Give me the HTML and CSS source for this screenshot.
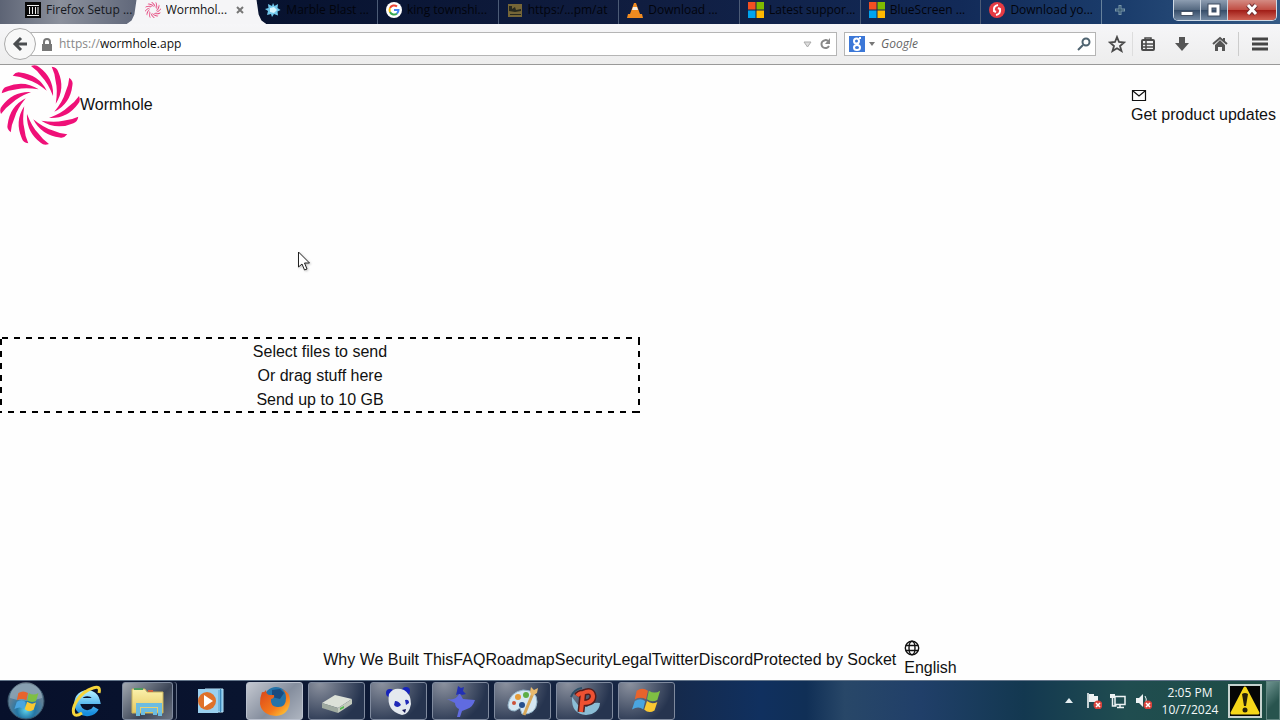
FILE: index.html
```html
<!DOCTYPE html>
<html lang="en">
<head>
<meta charset="utf-8">
<title>Wormhole</title>
<link rel="stylesheet" href="styles.css">
</head>
<body>
<svg class="defs" aria-hidden="true">
  <defs>
    <path id="blade" d="M31 1Q36-1 39 2Q54 13 53 31Q48 18 42 12Q37 5 31 1Z"/>
    <g id="swirl">
      <use href="#blade"/><use href="#blade" transform="rotate(30 40 40)"/><use href="#blade" transform="rotate(60 40 40)"/><use href="#blade" transform="rotate(90 40 40)"/><use href="#blade" transform="rotate(120 40 40)"/><use href="#blade" transform="rotate(150 40 40)"/><use href="#blade" transform="rotate(180 40 40)"/><use href="#blade" transform="rotate(210 40 40)"/><use href="#blade" transform="rotate(240 40 40)"/><use href="#blade" transform="rotate(270 40 40)"/><use href="#blade" transform="rotate(300 40 40)"/><use href="#blade" transform="rotate(330 40 40)"/>
    </g>
    <g id="windows-tiles"><path fill="#f25022" d="M0 0h7.500v7.500H0z"/><path fill="#7fba00" d="M8.500 0H16v7.500H8.500z"/><path fill="#00a4ef" d="M0 8.500h7.500V16H0z"/><path fill="#ffb900" d="M8.500 8.500H16V16H8.500z"/></g>
    <g id="windows-flag"><path fill="#e8642c" d="M3 5Q9 1 15 5L13 14Q7 11 1 14Z"/><path fill="#7fbf43" d="M16 5Q22 9 28 5L25 15Q19 18 14 14Z"/><path fill="#4aa5e0" d="M1 16Q7 12 12 16L10 25Q5 21-2 25Z"/><path fill="#fac832" d="M14 16Q19 20 25 17L22 26Q16 30 11 25Z"/></g>
    <g id="badge"><circle cx="13" cy="13" r="4.500" fill="#d9433c"/><path d="M11 11l4 4m0-4l-4 4" stroke="#fff" stroke-width="1.500"/></g>
    <radialGradient id="orb" cy=".75"><stop offset="0" stop-color="#5fd5ee"/><stop offset=".5" stop-color="#2476a5"/><stop offset="1" stop-color="#5f7f96"/></radialGradient>
    <linearGradient id="ie" x2="0" y2="1"><stop stop-color="#a6e9ff"/><stop offset="1" stop-color="#188fdf"/></linearGradient>
    <linearGradient id="folder" x2="0" y2="1"><stop stop-color="#fbf1ac"/><stop offset="1" stop-color="#e5c75f"/></linearGradient>
    <linearGradient id="fox" x2="1" y2="1"><stop stop-color="#d9431b"/><stop offset=".6" stop-color="#f47a1c"/><stop offset="1" stop-color="#ffd93d"/></linearGradient>
  </defs>
</svg>

<header class="browser">
  <div class="titlebar">
    <div class="tabs" role="tablist">
      <button class="tab tab-light" role="tab"><svg class="favicon" viewBox="0 0 16 16"><path fill="#090909" d="M0 0h16v16H0z"/><path stroke="#eee" d="M2 3.500h12M2 13.500h12M4.500 5v7M7.500 5v7M10.500 5v7M13 5v7"/></svg><span class="tab-label">Firefox Setup ...</span></button>
      <button class="tab tab-active" role="tab" aria-selected="true"><svg class="favicon" viewBox="0 0 80 80"><use href="#swirl" fill="#e64b80"/></svg><span class="tab-label">Wormhol...</span><svg class="tab-close" viewBox="0 0 8 8"><path d="M1 1l6 6m0-6L1 7" stroke="#777" stroke-width="2"/></svg></button>
      <button class="tab no-line" role="tab"><svg class="favicon" viewBox="0 0 16 16"><path fill="#72c9ed" d="M8 1l1.500 3L13 2l-.5 4 3 2-3 1.500.5 4-4-1.500L7 15l-1-3-4 1 1-4-3-2 3.500-1L3 2l4 2z"/><path fill="#d8f6ff" d="M5 6l4-1 3 3-3 3-4-1z"/></svg><span class="tab-label">Marble Blast ...</span></button>
      <button class="tab" role="tab"><svg class="favicon" viewBox="0 0 16 16"><circle cx="8" cy="8" r="8" fill="#fff"/><g fill="none" stroke-width="2"><path stroke="#ea4335" d="M4 6a4.500 4.500 0 0 1 7-1.500"/><path stroke="#fbbc05" d="M4 6a5 5 0 0 0 0 4"/><path stroke="#34a853" d="M4 10a4.500 4.500 0 0 0 7 1.500"/><path stroke="#4285f4" d="M8 8h4.500q0 2-1.500 3.500"/></g></svg><span class="tab-label">king townshi...</span></button>
      <button class="tab" role="tab"><svg class="favicon" viewBox="0 0 16 16"><path fill="#766637" d="M1 2h14v13H1z"/><path fill="#27291f" d="M2 4h3v3l3-2 1 3 5-1v2l-6 1-6-1zM3 12h11v1H3z"/></svg><span class="tab-label">https:/...pm/at</span></button>
      <button class="tab" role="tab"><svg class="favicon" viewBox="0 0 16 16"><path fill="#f08b20" d="M7 1h2l4 11H3zM1 12h14l1 4H0z"/><path fill="#f4eee3" d="M6 5h4l1 3H5z"/></svg><span class="tab-label">Download ...</span></button>
      <button class="tab" role="tab"><svg class="favicon" viewBox="0 0 16 16"><use href="#windows-tiles"/></svg><span class="tab-label">Latest suppor...</span></button>
      <button class="tab" role="tab"><svg class="favicon" viewBox="0 0 16 16"><use href="#windows-tiles"/></svg><span class="tab-label">BlueScreen ...</span></button>
      <button class="tab" role="tab"><svg class="favicon" viewBox="0 0 16 16"><circle cx="8" cy="8" r="8" fill="#e63b43"/><path d="M9 3Q4 4 5 9l2 1M7 13q5-1 4-6L9 6" fill="none" stroke="#fff" stroke-width="2"/></svg><span class="tab-label">Download yo...</span></button>
    </div>
    <button class="new-tab" aria-label="New tab"><svg width="12" height="12" viewBox="0 0 12 12"><path d="M6 1v10M1 6h10" stroke="#7895a8" stroke-width="3"/><path d="M6 2v8M2 6h8" stroke="#294c67"/></svg></button>
    <div class="window-buttons">
      <button class="win-button" aria-label="Minimize"><svg width="14" height="14" viewBox="0 0 14 14"><path fill="#fff" stroke="#455264" d="M1 8.500h12v4H1z"/></svg></button>
      <button class="win-button" aria-label="Restore"><svg width="14" height="14" viewBox="0 0 14 14"><path fill="none" stroke="#3f4c61" stroke-width="5" d="M3 3h8v8H3z"/><path fill="none" stroke="#fff" stroke-width="3" d="M3 3h8v8H3z"/></svg></button>
      <button class="win-button win-close" aria-label="Close"><svg width="14" height="14" viewBox="0 0 14 14"><path d="M3 2l8 9m0-9l-8 9" stroke="#713235" stroke-width="5"/><path d="M3 2l8 9m0-9l-8 9" stroke="#fff" stroke-width="3"/></svg></button>
    </div>
  </div>

  <div class="toolbar">
    <button class="back" aria-label="Back"><svg width="16" height="16" viewBox="0 0 16 16"><path d="M9 2L3 8l6 6M4 8h11" fill="none" stroke="#4a4d50" stroke-width="3"/></svg></button>
    <div class="address">
      <svg width="10" height="13" viewBox="0 0 10 13"><path d="M2 6V4a3 3 0 0 1 6 0v2" fill="none" stroke="#777" stroke-width="2"/><path fill="#777" d="M0 6h10v7H0z"/></svg>
      <a class="url" href="#"><span class="scheme">https://</span>wormhole.app</a>
      <svg width="9" height="7" viewBox="0 0 9 7"><path d="M1 1h7L4.500 6z" fill="#ddd" stroke="#aaa"/></svg>
      <button class="plain" aria-label="Reload"><svg width="12" height="12" viewBox="0 0 12 12"><path d="M9 3a4 4 0 1 0 1 5" fill="none" stroke="#888" stroke-width="2"/><path fill="#888" d="M11 0v6H6z"/></svg></button>
    </div>
    <div class="search">
      <svg width="16" height="16" viewBox="0 0 16 16"><path fill="#3c78d8" d="M0 0h16v16H0z"/><g fill="none" stroke="#fff" stroke-width="2"><circle cx="7.500" cy="5" r="2.500"/><ellipse cx="8" cy="11.500" rx="3" ry="2.500"/><path d="M10 2h2M9 7l-1 2"/></g></svg>
      <svg width="6" height="4" viewBox="0 0 6 4"><path fill="#777" d="M0 0h6L3 4z"/></svg>
      <input class="search-input" type="text" placeholder="Google" aria-label="Search with Google">
      <button class="plain" aria-label="Search"><svg width="14" height="14" viewBox="0 0 14 14"><circle cx="9" cy="5" r="3.500" fill="none" stroke="#4e6370" stroke-width="2"/><path d="M6 8l-5 5" stroke="#4e6370" stroke-width="2"/></svg></button>
    </div>
    <div class="tools">
      <button class="tool tool-star" aria-label="Bookmark"><svg width="18" height="18" viewBox="0 0 18 18"><path d="M9 2l2 5 5 .5-4 3.500 1.500 5L9 13.200 4.500 16 6 11 2 7.500 7 7z" fill="none" stroke="#4a4a4a" stroke-width="1.800"/></svg></button>
      <button class="tool tool-list" aria-label="Bookmarks menu"><svg width="16" height="16" viewBox="0 0 16 16"><rect x="2" y="4" width="12" height="10" rx="1" fill="none" stroke="#4a4a4a" stroke-width="2"/><path d="M5 4V2h6v2M3 8h11M3 11h11M6 5v9" fill="none" stroke="#4a4a4a" stroke-width="1.500"/></svg></button>
      <button class="tool" aria-label="Downloads"><svg width="16" height="16" viewBox="0 0 16 16"><path fill="#555" d="M5 1h6v6h4l-7 8-7-8h4z"/></svg></button>
      <button class="tool" aria-label="Home"><svg width="16" height="16" viewBox="0 0 16 16"><path d="M1 8l7-6 7 6" fill="none" stroke="#555" stroke-width="2"/><path fill="#555" d="M3 9l5-5 5 5v6h-3v-4H6v4H3zM11 2h2v4h-2z"/></svg></button>
      <button class="tool tool-menu" aria-label="Menu"><svg width="16" height="14" viewBox="0 0 16 14"><path d="M0 2h16M0 7h16M0 12h16" stroke="#444" stroke-width="3"/></svg></button>
    </div>
  </div>
</header>

<div class="page">
  <div class="page-header">
    <a class="brand" href="#"><svg width="80" height="80" viewBox="0 0 80 80"><use href="#swirl" fill="#ef1078"/></svg>Wormhole</a>
    <a class="updates" href="#"><svg width="16" height="16" viewBox="0 0 16 16"><path d="M1.500 3.500h13v10h-13zM2 4l6 5 6-5" fill="none" stroke="#111" stroke-width="1.200"/></svg>Get product updates</a>
  </div>
  <main class="main">
    <div class="drop">
      <button class="plain drop-button">Select files to send</button>
      <span>Or drag stuff here</span>
      <span>Send up to 10 GB</span>
    </div>
  </main>
  <footer class="footer">
    <nav class="links"><a href="#">Why We Built This</a><a href="#">FAQ</a><a href="#">Roadmap</a><a href="#">Security</a><a href="#">Legal</a><a href="#">Twitter</a><a href="#">Discord</a><a href="#">Protected by Socket</a></nav>
    <button class="plain language"><svg width="16" height="16" viewBox="0 0 16 16"><g fill="none" stroke="#111" stroke-width="1.400"><circle cx="8" cy="8" r="6.700"/><ellipse cx="8" cy="8" rx="3" ry="6.700"/><path d="M2 5.500h12M2 10.500h12"/></g></svg>English</button>
  </footer>
</div>

<footer class="taskbar">
  <button class="start" aria-label="Start"><svg width="38" height="38" viewBox="0 0 38 38"><circle cx="19" cy="19" r="18" fill="url(#orb)" stroke="#385468"/><path fill="#fff" opacity=".25" d="M3 16A16 16 0 0 1 35 16Q19 22 3 16"/><use href="#windows-flag" transform="translate(9 7) scale(.8)"/></svg></button>
  <button class="pinned" aria-label="Internet Explorer"><svg width="34" height="34" viewBox="0 0 34 34"><path d="M26 24A10 10 0 1 1 27 17H9" fill="none" stroke="url(#ie)" stroke-width="6"/><path d="M29 9Q31 1 23 4C10 8 1 23 4 30q2 3 8-1" fill="none" stroke="#f6d53c" stroke-width="3"/></svg></button>
  <button class="task explorer" aria-label="Windows Explorer"><svg width="34" height="32" viewBox="0 0 34 32"><path fill="url(#folder)" stroke="#c8b45f" d="M1 4h13l2 3h16v21H1z"/><path stroke="#4d9960" stroke-width="2" d="M3 4h9"/><path stroke="#cc6040" stroke-width="2" d="M17 6h5"/><path d="M7 31V20h22v11m-17-1v-5h12v5" fill="none" stroke="#6dbce0" stroke-width="4"/></svg></button>
  <button class="pinned media" aria-label="Media Player"><svg width="28" height="26" viewBox="0 0 28 26"><path fill="#75b8e0" stroke="#bde5f8" d="M8 1h18v23H8z"/><path stroke="#3b87b8" d="M23.500 1v23"/><path fill="#9bd0ee" d="M1 1h20v24H1z"/><circle cx="10" cy="13" r="9" fill="#df712a"/><path fill="#fff" d="M7 7l9 6-9 6z"/></svg></button>
  <div class="tasks">
    <button class="task task-active" aria-label="Firefox"><svg width="32" height="32" viewBox="0 0 32 32"><circle cx="17" cy="14" r="12" fill="#2573a8"/><path fill="#184b80" d="M13 5l8-1 4 4-4 6-8-2z"/><path fill="url(#fox)" d="M3 7q2 1 4-2 0 4 3 5l5 0q1 3-3 4-1 7 6 8 9 1 9-9 0-6-4-9 8 3 8 12-1 14-14 15Q3 30 1 19q0-7 2-12"/></svg></button>
    <button class="task" aria-label="Drive"><svg width="34" height="28" viewBox="0 0 34 28"><path fill="#dce1d8" d="M2 16L15 8l17 4-14 9z"/><path fill="#9faaa0" d="M2 16l16 5v5L2 21z"/><path fill="#c3cabd" d="M18 21l14-9v5l-14 9z"/><path fill="#53b94e" d="M20 21l4-2v2l-4 2z"/></svg></button>
    <button class="task" aria-label="Panda"><svg width="28" height="32" viewBox="0 0 28 32"><circle cx="5" cy="8" r="4" fill="#1724ba"/><circle cx="21" cy="6" r="4" fill="#1724ba"/><path fill="#e4e9ef" d="M4 9Q9 1 19 5q7 4 7 14-2 11-9 11Q1 26 4 9"/><path fill="#2029b8" d="M10 16q4 0 6 4-4 4-7 0zM20 15q4-1 4 3l-3 2z"/><path fill="#111453" d="M17 25l4-1-1 4z"/></svg></button>
    <button class="task" aria-label="Bird"><svg width="34" height="34" viewBox="0 0 34 34"><path fill="#2230b4" d="M14 2l3 2 3-1-1 4 3 3-4 1-2-1-4 1 1-4z"/><path fill="#606be0" d="M16 10l3 5 12 1q-2 7-8 9l-5 2-2 6h-3l2-8q-4-2-4-6L3 15q9 2 12-5"/></svg></button>
    <button class="task" aria-label="Paint"><svg width="34" height="32" viewBox="0 0 34 32"><path fill="#d5e7f3" stroke="#94b4c9" d="M2 20Q4 7 17 5q14 0 14 12-1 13-15 12l-2-6-5 3q-7 0-7-6"/><circle cx="12" cy="12" r="3" fill="#e59b37"/><circle cx="20" cy="10" r="3" fill="#5dae47"/><circle cx="8" cy="18" r="2" fill="#cc5139"/><circle cx="16" cy="20" r="3" fill="#264f8c"/><path d="M18 30l9-22" stroke="#d8a758" stroke-width="3"/><path fill="#e9ba6e" d="M25 2l3 3 4-2-1 5-5 3-2-4z"/></svg></button>
    <button class="task" aria-label="Paint Shop"><svg width="34" height="34" viewBox="0 0 34 34"><path fill="#8bbdd5" d="M4 13q-1 17 14 18 13-1 14-12-8-1-13 4l-9-2z"/><path d="M3 13Q6 5 14 4" fill="none" stroke="#2c4f68" stroke-width="2"/><path d="M13 28L15 9Q11 9 9 12M15 9q9-4 10 3 0 7-10 7" fill="none" stroke="#521d1d" stroke-width="7"/><path d="M13 28L15 9Q11 9 9 12M15 9q9-4 10 3 0 7-10 7" fill="none" stroke="#ef5132" stroke-width="4"/></svg></button>
    <button class="task" aria-label="Windows"><svg width="30" height="30" viewBox="-2 0 32 32"><use href="#windows-flag"/></svg></button>
  </div>
  <div class="tray">
    <button class="plain" aria-label="Show hidden icons"><svg width="8" height="5" viewBox="0 0 8 5"><path fill="#e5eff2" d="M0 5l4-5 4 5z"/></svg></button>
    <svg width="17" height="17" viewBox="0 0 17 17"><path d="M3 1v15" stroke="#fff" stroke-width="1.500"/><path fill="#eef3f4" d="M4 2h5v2h4v6H4z"/><use href="#badge"/></svg>
    <svg width="17" height="17" viewBox="0 0 17 17"><path d="M5 4.500h10v8H5zM7 15.500h7M10 13v2M2.500 4v10h4" fill="none" stroke="#eef3f4" stroke-width="1.500"/><path fill="#eef3f4" d="M0 2h5v4H0z"/></svg>
    <svg width="17" height="17" viewBox="0 0 17 17"><path fill="#eef3f4" d="M1 6h3l4-4v13l-4-4H1z"/><path d="M10 4q2 3 1 6" stroke="#eef3f4" fill="none"/><use href="#badge"/></svg>
    <time class="clock">2:05 PM<br>10/7/2024</time>
    <svg class="warning" width="34" height="34" viewBox="0 0 34 34"><path fill="#050505" stroke="#c6d3cf" stroke-width="2" d="M1 1h32v32H1z"/><path fill="#f5d619" stroke="#f5d619" stroke-width="3" stroke-linejoin="round" d="M17 4L30 29H4z"/><path fill="#26200a" d="M14 10q3-2 6 0l-2 12h-2z"/><circle cx="17" cy="26" r="2.500" fill="#26200a"/></svg>
  </div>
  <button class="show-desktop" aria-label="Show desktop"></button>
</footer>

<svg class="cursor" width="13" height="20" viewBox="0 0 13 20" aria-hidden="true"><path fill="#fff" stroke="#222" d="M.5 1v15l3.500-3 2.500 6 2.500-1-2.500-6h5z"/></svg>
</body>
</html>
```
FILE: styles.css
```css
* { box-sizing: border-box; }
body {
  margin: 0;
  min-height: 100vh;
  display: flex;
  flex-direction: column;
  font: 16px/24px "Liberation Sans", Arial, sans-serif;
  color: #111;
  background: #fefefe;
}
svg { display: block; flex: none; }
button { font: inherit; color: inherit; padding: 0; border: 0; background: none; }
a { color: inherit; text-decoration: none; }
.defs { position: absolute; width: 0; height: 0; }
.browser { font: 12px/20px "Open Sans", "Noto Sans", sans-serif; }

.titlebar {
  display: flex;
  height: 24px;
  padding: 0 3px 0 16px;
  background: linear-gradient(90deg, #5d6475 0, #8b909c 60px, #646b7d 130px, #07122f 260px, #101d40 50%, #122a58 75%, #1b3d6c 88%, #345a85 100%);
}
.tabs { flex: 1; display: flex; }
.tab {
  flex: 1 1 0;
  min-width: 0;
  height: 24px;
  padding: 0 0 4px 8px;
  display: flex;
  align-items: center;
  gap: 5px;
  color: #02040c;
  border-left: 1px solid #4c5b76;
}
.tab-light, .no-line { border-color: transparent; }
.tab-light { color: #151820; }
.tab-label { flex: 1; overflow: hidden; white-space: nowrap; text-align: left; }
.favicon { width: 16px; height: 16px; }
.tab-active { position: relative; z-index: 0; border: 0; color: #111; background: #f5f5f7; }
.tab-active::before, .tab-active::after {
  content: "";
  position: absolute;
  z-index: -1;
  top: 0;
  width: 14px;
  height: 24px;
  background: #f5f5f7;
}
.tab-active::before { left: -10px; clip-path: polygon(100% 0, 70% 0, 55% 60%, 35% 85%, 0 100%, 100% 100%); }
.tab-active::after { right: -10px; clip-path: polygon(0 0, 30% 0, 45% 60%, 65% 85%, 100% 100%, 0 100%); }
.tab-close { width: 8px; height: 8px; margin-right: 12px; }
.new-tab {
  width: 72px;
  padding: 0 0 4px 12px;
  border-left: 1px solid #66819c;
}
.window-buttons {
  display: flex;
  height: 21px;
  border: 1px solid #d0dbe6;
  border-top: 0;
  border-radius: 0 0 5px 5px;
  overflow: hidden;
}
.win-button {
  width: 27px;
  display: grid;
  place-items: center;
  border-right: 1px solid #c7d2de;
  background: linear-gradient(#8d9db1, #53677f 50%, #354c68 51%, #7389a2);
}
.win-close { width: 48px; border: 0; background: linear-gradient(#d48b83, #c04c42 50%, #a11d17 51%, #cf6355); }

.toolbar {
  display: flex;
  align-items: center;
  height: 41px;
  padding: 0 12px 0 4px;
  border-bottom: 1px solid #999;
  background: linear-gradient(#f6f6f8, #ededed);
}
.back {
  position: relative;
  width: 32px;
  height: 32px;
  display: grid;
  place-items: center;
  border: 1px solid #aaa;
  border-radius: 50%;
  background: #f8f8f8;
}
.address, .search {
  height: 24px;
  display: flex;
  align-items: center;
  border: 1px solid #b5b5b5;
  background: #fff;
}
.address { flex: 1; gap: 7px; margin-left: -14px; padding: 0 5px 0 20px; border-left: 0; }
.url { flex: 1; }
.scheme { color: #888; }
.search { width: 252px; margin-left: 7px; padding: 0 4px; gap: 4px; }
.search-input {
  flex: 1;
  min-width: 0;
  padding: 0 2px;
  border: 0;
  outline: 0;
  background: none;
  font: italic 12px/20px "Open Sans", "Noto Sans", sans-serif;
}
.search-input::placeholder { color: #666; opacity: 1; }
.tools { display: flex; align-items: center; padding-left: 6px; }
.tool { width: 35px; height: 24px; display: grid; place-items: center; }
.tool-star { width: 30px; }
.tool-list { width: 30px; border-left: 1px solid #ddd; }
.tools .tool:nth-child(3) { width: 40px; }
.tools .tool:nth-child(4) { width: 36px; }
.tool-menu { width: 30px; border-left: 1px solid #ccc; justify-content: end; }

.page { flex: 1; display: flex; flex-direction: column; }
.page-header { display: flex; align-items: center; justify-content: space-between; padding-right: 4px; }
.brand { display: flex; align-items: center; }
.updates { display: flex; flex-direction: column; padding-top: 3px; }
.main { flex: 1; display: flex; align-items: center; }
.drop {
  width: 50%;
  padding: 3px 2px 1px;
  display: flex;
  flex-direction: column;
  align-items: center;
  background:
    repeating-linear-gradient(90deg, #000 0 6px, transparent 6px 12px) 2px 0 / 100% 2px no-repeat,
    repeating-linear-gradient(90deg, #000 0 6px, transparent 6px 12px) -4px 100% / 120% 2px no-repeat,
    repeating-linear-gradient(#000 0 6px, transparent 6px 12px) 0 2px / 2px 100% no-repeat,
    repeating-linear-gradient(#000 0 6px, transparent 6px 12px) 100% 2px / 2px 100% no-repeat;
}
.plain { cursor: pointer; }
.drop-button { line-height: 24px; }
.footer { display: flex; justify-content: center; align-items: center; gap: 8px; padding-top: 36px; }
.links { display: flex; }
.language { display: flex; flex-direction: column; }

.taskbar {
  height: 40px;
  display: flex;
  align-items: center;
  border-top: 1px solid #63758a;
  background: linear-gradient(90deg, #07102b 0, #09142f 240px, #172744 640px, #10305f 760px, #102f56 63%, #284768 66%, #203f69 72%, #133850 80%, #204d50 88%, #1d4c43 100%);
}
.start { width: 52px; display: grid; place-items: center; }
.pinned { width: 70px; display: grid; place-items: center; }
.task {
  width: 57px;
  height: 38px;
  display: grid;
  place-items: center;
  border: 1px solid #7f8a9e;
  border-radius: 3px;
  background: radial-gradient(circle at 20% 0, #8c929f, transparent 75%), #26344f;
}
.explorer { width: 51px; box-shadow: 3px 0 0 #101a31, 4px 0 0 #657087; background: linear-gradient(135deg, #a2a8b0, #3c4557 60%, #6c7482); }
.task-active { border-color: #b9c0cd; background: linear-gradient(135deg, #c4c8d0, #858e9e 55%, #aeb5c0); }
.media { margin-left: 3px; }
.tasks { flex: 1; display: flex; gap: 5px; }
.tray { display: flex; align-items: center; gap: 8px; }
.tray .plain { margin-right: 4px; }
.clock {
  width: 60px;
  text-align: center;
  font: 12px/17px "Open Sans", "Noto Sans", sans-serif;
  color: #f4f8f8;
}
.show-desktop { width: 14px; height: 39px; margin-left: 4px; border: 1px solid #60847f; background: linear-gradient(135deg, #6f9490, #28544e 60%); }
.cursor { position: absolute; left: 298px; top: 251px; filter: drop-shadow(1px 1px 1px #9999); }
```
